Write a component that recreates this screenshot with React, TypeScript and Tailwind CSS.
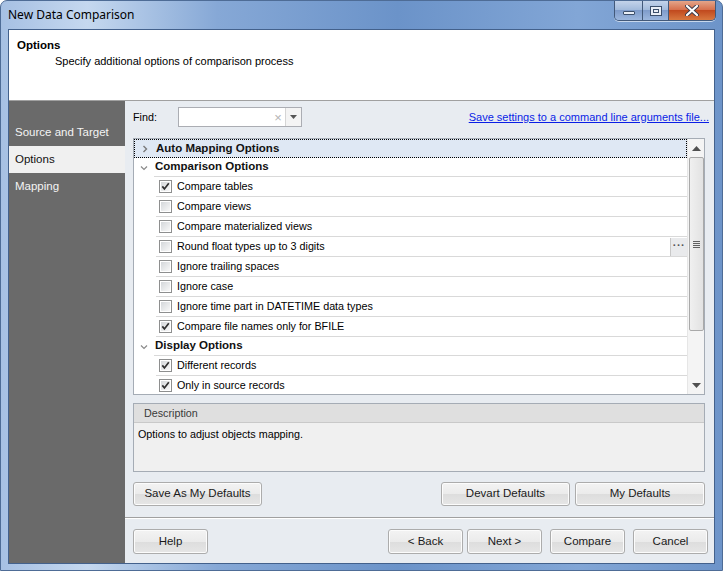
import React from 'react';

type Row =
  | { kind: 'cat'; label: string; open: boolean; selected?: boolean }
  | { kind: 'item'; label: string; checked: boolean; more?: boolean };

const rows: Row[] = [
  { kind: 'cat', label: 'Auto Mapping Options', open: false, selected: true },
  { kind: 'cat', label: 'Comparison Options', open: true },
  { kind: 'item', label: 'Compare tables', checked: true },
  { kind: 'item', label: 'Compare views', checked: false },
  { kind: 'item', label: 'Compare materialized views', checked: false },
  { kind: 'item', label: 'Round float types up to 3 digits', checked: false, more: true },
  { kind: 'item', label: 'Ignore trailing spaces', checked: false },
  { kind: 'item', label: 'Ignore case', checked: false },
  { kind: 'item', label: 'Ignore time part in DATETIME data types', checked: false },
  { kind: 'item', label: 'Compare file names only for BFILE', checked: true },
  { kind: 'cat', label: 'Display Options', open: true },
  { kind: 'item', label: 'Different records', checked: true },
  { kind: 'item', label: 'Only in source records', checked: true },
];

function CheckBox({ checked }: { checked: boolean }) {
  return (
    <span className="flex h-[13px] w-[13px] shrink-0 items-center justify-center border border-[#8e8f8f] bg-white">
      <span className="flex h-[9px] w-[9px] items-center justify-center bg-[linear-gradient(135deg,#d4d7da,#f8f8f8)]">
        {checked && (
          <svg width="9" height="9" viewBox="0 0 9 9">
            <path d="M1.3 4.4 L3.4 6.9 L7.8 1.2" fill="none" stroke="#2f2f2f" strokeWidth="1.7" />
          </svg>
        )}
      </span>
    </span>
  );
}

function Chevron({ open }: { open: boolean }) {
  return open ? (
    <svg width="8" height="6" viewBox="0 0 8 6">
      <path d="M1 1.5 L4 4.5 L7 1.5" fill="none" stroke="#8a8a8a" strokeWidth="1.2" />
    </svg>
  ) : (
    <svg width="6" height="8" viewBox="0 0 6 8">
      <path d="M1.5 1 L4.5 4 L1.5 7" fill="none" stroke="#7a7a7a" strokeWidth="1.4" />
    </svg>
  );
}

function Btn({ label, w, h = 'h-[24px]' }: { label: string; w: string; h?: string }) {
  return (
    <button
      className={`${w} ${h} rounded-[3px] border border-[#acacac] bg-[linear-gradient(180deg,#f3f3f3_0%,#ebebeb_50%,#dddddd_51%,#e6e6e6_100%)] text-[11.5px] text-[#1a1a1a] shadow-[inset_0_0_0_1px_#fcfcfc]`}
    >
      {label}
    </button>
  );
}

function CaptionButtons() {
  return (
    <div className="flex h-[20px] overflow-hidden rounded-b-[5px] border border-t-0 border-[#42597a] shadow-[0_1px_0_#c7d7ec]">
      <div className="flex w-[28px] items-center justify-center border-r border-[#42597a] bg-[linear-gradient(180deg,#c3d3ea_0%,#a3bbdc_45%,#7f9ccb_50%,#9cb7de_100%)]">
        <span className="mt-[4px] h-[4px] w-[12px] rounded-[1px] border border-[#3c4f6b] bg-[#e9eef6]" />
      </div>
      <div className="flex w-[26px] items-center justify-center border-r border-[#42597a] bg-[linear-gradient(180deg,#c3d3ea_0%,#a3bbdc_45%,#7f9ccb_50%,#9cb7de_100%)]">
        <span className="flex h-[10px] w-[12px] items-center justify-center border border-[#3c4f6b] bg-[#e9eef6]">
          <span className="h-[4px] w-[6px] border border-[#3c4f6b]" />
        </span>
      </div>
      <div className="flex w-[46px] items-center justify-center bg-[linear-gradient(180deg,#e4a58a_0%,#d7714e_45%,#c14a1f_50%,#d8783f_100%)]">
        <svg width="14" height="11" viewBox="0 0 14 11">
          <path d="M2 1 L12 10 M12 1 L2 10" stroke="#3c3c4c" strokeWidth="4" strokeLinecap="round" />
          <path d="M2 1 L12 10 M12 1 L2 10" stroke="#ffffff" strokeWidth="2.2" strokeLinecap="round" />
        </svg>
      </div>
    </div>
  );
}

export default function App() {
  return (
    <div
      className="relative flex h-[571px] w-[723px] flex-col overflow-hidden rounded-t-[7px] border border-[#4e6c96] bg-[linear-gradient(90deg,#a6c0e3_0%,#c5d8ef_12%,#86a8d6_30%,#6b93c9_55%,#82a6d6_80%,#6d94c9_100%)] text-[10.75px] text-black"
      style={{ fontFamily: '"Liberation Sans", Arial, sans-serif' }}
    >
      {/* title bar */}
      <div className="flex h-[28px] shrink-0 items-start justify-between">
        <span
          className="pl-[7px] pt-[5px] text-[12px] text-black"
          style={{ fontFamily: '"Noto Sans", "Open Sans", sans-serif' }}
        >
          New Data Comparison
        </span>
        <div className="mr-[6px]">
          <CaptionButtons />
        </div>
      </div>

      {/* client */}
      <div className="mx-[7px] flex h-[535px] flex-col border border-[#43618c] bg-white">
        {/* header */}
        <div className="h-[71px] shrink-0 border-b border-[#a0a0a0] bg-white px-[8px] pt-[7px]">
          <div className="text-[11.5px] font-bold">Options</div>
          <div className="mt-[-1px] pl-[38px] text-[11px]">Specify additional options of comparison process</div>
        </div>

        <div className="flex min-h-0 flex-1">
          {/* nav */}
          <div className="flex w-[116px] shrink-0 flex-col bg-[#6a6a6a] pt-[18px] text-[11.5px]">
            <div className="flex h-[27px] items-center px-[6px] text-[#f4f4f4]">Source and Target</div>
            <div className="flex h-[27px] items-center bg-[#f0f0f0] px-[6px] text-[#111]">Options</div>
            <div className="flex h-[27px] items-center px-[6px] text-[#f4f4f4]">Mapping</div>
          </div>

          {/* content */}
          <div className="flex flex-1 flex-col bg-[#e8ecf1]">
            <div className="flex flex-col pl-[8px] pr-[9px]">
              {/* find row */}
              <div className="mt-[6px] flex h-[20px] items-center">
                <span className="w-[45px]">Find:</span>
                <div className="flex h-[20px] w-[124px] items-center border border-[#abadb3] bg-white">
                  <span className="flex-1" />
                  <span className="w-[14px] text-center text-[13px] leading-none text-[#b4b4b4]">×</span>
                  <span className="flex h-full w-[16px] items-center justify-center border-l border-[#d5d5d5] bg-[#f4f4f4]">
                    <svg width="7" height="4" viewBox="0 0 7 4">
                      <path d="M0 0 H7 L3.5 4 Z" fill="#555" />
                    </svg>
                  </span>
                </div>
                <span className="flex-1" />
                <a className="mr-[-4px] text-[11px] text-[#0a1ee6] underline">Save settings to a command line arguments file...</a>
              </div>

              {/* property grid */}
              <div className="mt-[11px] flex h-[257px] overflow-hidden border border-[#a5acb5] bg-white">
                <div className="flex min-w-0 flex-1 flex-col">
                  {rows.map((r, i) =>
                    r.kind === 'cat' ? (
                      <div
                        key={i}
                        className={`flex h-[19px] shrink-0 items-center ${r.selected ? 'border border-dotted border-black bg-[#dfe8f4]' : ''}`}
                      >
                        <span className="flex w-[20px] justify-center">
                          <Chevron open={r.open} />
                        </span>
                        <span
                          className={`flex h-full flex-1 items-center pl-[1px] text-[11.5px] font-bold text-[#111] ${r.selected ? '' : 'border-b border-[#d9d9d9]'}`}
                        >
                          {r.label}
                        </span>
                      </div>
                    ) : (
                      <div key={i} className="flex h-[20px] shrink-0">
                        <span className="w-[22px]" />
                        <span className="flex flex-1 items-center border-b border-[#d9d9d9] pl-[3px]">
                          <CheckBox checked={r.checked} />
                          <span className="ml-[5px] flex-1">{r.label}</span>
                          {r.more && (
                            <span className="flex h-[18px] w-[17px] items-center justify-center border-l border-[#c8c8c8] bg-[#e9eaec] pb-[3px] text-[11px] font-bold tracking-[0.5px] text-[#555]">
                              ···
                            </span>
                          )}
                        </span>
                      </div>
                    ),
                  )}
                </div>

                {/* scrollbar */}
                <div className="flex w-[17px] shrink-0 flex-col items-center border-l border-[#e6e6e6] bg-[#f4f4f4]">
                  <div className="flex h-[18px] items-center justify-center">
                    <svg width="9" height="5" viewBox="0 0 9 5">
                      <path d="M0 5 L4.5 0 L9 5 Z" fill="#505050" />
                    </svg>
                  </div>
                  <div className="flex h-[174px] w-[15px] items-center justify-center rounded-[2px] border border-[#a9a9a9] bg-[linear-gradient(90deg,#f0f0f0,#e2e2e2)]">
                    <div className="flex flex-col gap-[1px]">
                      <span className="h-[1px] w-[7px] bg-[#606060]" />
                      <span className="h-[1px] w-[7px] bg-[#606060]" />
                      <span className="h-[1px] w-[7px] bg-[#606060]" />
                      <span className="h-[1px] w-[7px] bg-[#606060]" />
                    </div>
                  </div>
                  <div className="flex-1" />
                  <div className="flex h-[18px] items-center justify-center">
                    <svg width="9" height="5" viewBox="0 0 9 5">
                      <path d="M0 0 L9 0 L4.5 5 Z" fill="#505050" />
                    </svg>
                  </div>
                </div>
              </div>

              {/* description */}
              <div className="mt-[8px] flex h-[69px] flex-col border border-[#a5acb5] bg-[#f0f0f0]">
                <div className="flex h-[19px] items-center border-b border-[#c9c9c9] bg-[#dfdfdf] pl-[10px] text-[#3a3a3a]">
                  Description
                </div>
                <div className="pl-[4px] pt-[3px]">Options to adjust objects mapping.</div>
              </div>

              {/* defaults buttons */}
              <div className="mt-[10px] flex gap-[5px]">
                <Btn label="Save As My Defaults" w="w-[129px]" />
                <span className="flex-1" />
                <Btn label="Devart Defaults" w="w-[129px]" />
                <Btn label="My Defaults" w="w-[130px]" />
              </div>
            </div>

            <div className="mt-[11px] border-t border-[#a0a0a0] shadow-[0_1px_0_#ffffff]" />

            {/* wizard buttons */}
            <div className="mt-[11px] flex pl-[8px] pr-[6px]">
              <Btn label="Help" w="w-[75px]" h="h-[25px]" />
              <span className="flex-1" />
              <div className="flex gap-[4px]">
                <Btn label="< Back" w="w-[75px]" h="h-[25px]" />
                <Btn label="Next >" w="w-[75px]" h="h-[25px]" />
              </div>
              <div className="ml-[8px] flex gap-[8px]">
                <Btn label="Compare" w="w-[75px]" h="h-[25px]" />
                <Btn label="Cancel" w="w-[75px]" h="h-[25px]" />
              </div>
            </div>
          </div>
        </div>
      </div>
    </div>
  );
}
